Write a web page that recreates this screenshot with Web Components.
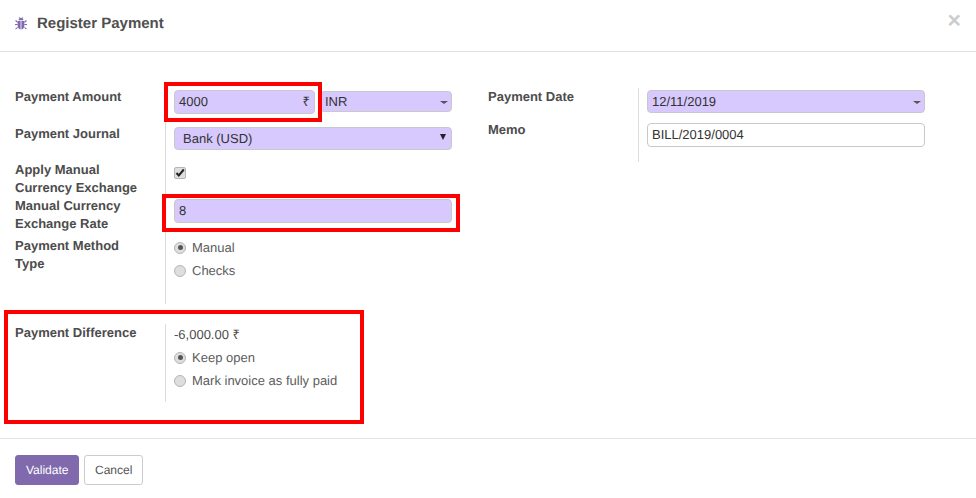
<!DOCTYPE html>
<html>
<head>
<meta charset="utf-8">
<title>Register Payment</title>
<style>
  html, body { margin: 0; padding: 0; background: #fff; }
  body { font: 13px/18px "Liberation Sans", Arial, sans-serif; color: #4c4c4c; text-rendering: geometricPrecision; }
</style>
</head>
<body>

<payment-dialog>
  <dialog-header slot="header">Register Payment</dialog-header>

  <div slot="groups-left">
    <form-group>
      <form-row height="37" label="Payment Amount">
        <div style="display:flex;gap:5px;align-items:flex-start">
          <field-box width="141" height="24" top="2" suffix="₹" required>4000</field-box>
          <field-box width="132" height="21" top="3" caret="grey" required>INR</field-box>
        </div>
      </form-row>
      <form-row height="36" label="Payment Journal">
        <field-box width="278" height="23" top="2" caret="black" pad="8" required>Bank (USD)</field-box>
      </form-row>
      <form-row height="36" label="Apply Manual Currency Exchange">
        <check-mark></check-mark>
      </form-row>
      <form-row height="40" label="Manual Currency Exchange Rate">
        <field-box width="278" height="24" top="2" required>8</field-box>
      </form-row>
      <form-row height="67" label="Payment Method Type">
        <radio-option checked style="margin-top:-1px">Manual</radio-option>
        <radio-option>Checks</radio-option>
      </form-row>
    </form-group>

    <form-group style="margin-top:20px">
      <form-row height="78" label="Payment Difference">
        <div style="height:22px;line-height:22px">-6,000.00 ₹</div>
        <radio-option checked>Keep open</radio-option>
        <radio-option>Mark invoice as fully paid</radio-option>
      </form-row>
    </form-group>
  </div>

  <div slot="groups-right">
    <form-group>
      <form-row height="33" label="Payment Date">
        <field-box width="278" height="23" top="2" caret="grey" required>12/11/2019</field-box>
      </form-row>
      <form-row height="41" label="Memo">
        <field-box width="278" height="24" top="2">BILL/2019/0004</field-box>
      </form-row>
    </form-group>
  </div>

  <action-button slot="footer" primary>Validate</action-button>
  <action-button slot="footer">Cancel</action-button>
</payment-dialog>

<annot-box style="left:164px;top:82px;width:158px;height:40px"></annot-box>
<annot-box style="left:162px;top:194px;width:298px;height:38px"></annot-box>
<annot-box style="left:4px;top:310px;width:360px;height:114px"></annot-box>

<script>
class PaymentDialog extends HTMLElement {
  connectedCallback() {
    this.attachShadow({ mode: 'open' });
    this.shadowRoot.innerHTML = `
      <style>
        :host { display: block; width: 976px; height: 498px; overflow: hidden; }
        .body {
          display: flex;
          height: 350px;
          padding: 36px 0 0 15px;
        }
        .left { width: 473px; }
        .footer {
          display: flex;
          gap: 5px;
          border-top: 1px solid #e2e2e2;
          padding: 16px 15px 0;
        }
      </style>
      <slot name="header"></slot>
      <div class="body">
        <div class="left"><slot name="groups-left"></slot></div>
        <div class="right"><slot name="groups-right"></slot></div>
      </div>
      <div class="footer"><slot name="footer"></slot></div>
    `;
  }
}

class DialogHeader extends HTMLElement {
  connectedCallback() {
    this.attachShadow({ mode: 'open' });
    this.shadowRoot.innerHTML = `
      <style>
        :host {
          display: flex;
          align-items: center;
          height: 47px;
          padding-bottom: 4px;
          border-bottom: 1px solid #e2e2e2;
          position: relative;
        }
        svg { margin-left: 15px; width: 12px; height: 13px; flex: none; }
        h4 {
          margin: 0 0 0 10px;
          font-size: 15px;
          line-height: 18px;
          font-weight: bold;
          color: #505050;
        }
        .close {
          position: absolute;
          right: 15px;
          top: 10px;
          font-size: 23px;
          line-height: 21px;
          font-weight: bold;
          color: #cccccc;
        }
      </style>
      <svg viewBox="0 0 12 13" fill="#8069ad">
        <path d="M3.600 3.200C3.800 1.600 4.800.8 6 .8s2.200.8 2.400 2.400z"/>
        <path d="M2.700 4h2.900v8.400C3.800 12.200 2.700 10.800 2.700 9zM6.400 4h2.900v5c0 1.800-1.100 3.200-2.900 3.400z"/>
        <path d="M.9 3l1.800 1.600v1H1.900L.2 4zM11.100 3L9.300 4.600v1h.8L11.800 4zM0 7h2.700v1H0zM9.300 7H12v1H9.300zM2.700 9.800v1L1 12.500l-.8-.8zM9.300 9.800v1l1.700 1.700.8-.8zM3.700.3l.6-.3.7 1-.6.300zM8.300.3L7.700 0 7 1l.6.300z"/>
      </svg>
      <h4><slot></slot></h4>
      <span class="close">×</span>
    `;
  }
}

class FormGroup extends HTMLElement {
  connectedCallback() {
    this.attachShadow({ mode: 'open' });
    this.shadowRoot.innerHTML = `
      <style>:host { display: block; }</style>
      <slot></slot>
    `;
  }
}

class FormRow extends HTMLElement {
  connectedCallback() {
    this.attachShadow({ mode: 'open' });
    const h = this.getAttribute('height');
    this.shadowRoot.innerHTML = `
      <style>
        :host { display: flex; height: ${h}px; }
        .label {
          width: 150px;
          box-sizing: border-box;
          padding-right: 20px;
          font-weight: bold;
          color: #4c4c4c;
        }
        .field {
          width: 287px;
          box-sizing: border-box;
          border-left: 1px solid #dcdcdc;
          padding-left: 8px;
        }
      </style>
      <div class="label">${this.getAttribute('label')}</div>
      <div class="field"><slot></slot></div>
    `;
  }
}

class FieldBox extends HTMLElement {
  connectedCallback() {
    this.attachShadow({ mode: 'open' });
    const w = this.getAttribute('width');
    const h = this.getAttribute('height');
    const top = this.getAttribute('top') || 0;
    const pad = this.getAttribute('pad') || 4;
    const bg = this.hasAttribute('required') ? '#d7c9fd' : '#fff';
    const caret = this.getAttribute('caret');
    const suffix = this.getAttribute('suffix');
    let end = '';
    if (suffix) end = `<span class="suffix">${suffix}</span>`;
    if (caret) end = `<span class="caret ${caret}"></span>`;
    this.shadowRoot.innerHTML = `
      <style>
        :host {
          display: flex;
          align-items: center;
          box-sizing: border-box;
          width: ${w}px;
          height: ${h}px;
          margin-top: ${top}px;
          padding: 0 3px 0 ${pad}px;
          background: ${bg};
          border: 1px solid #c9c9c9;
          border-radius: 4px;
          color: #333;
          flex: none;
        }
        .text { flex: 1; }
        .suffix { font-size: 13px; color: #333; margin-right: 1px; }
        .caret { width: 0; height: 0; border-style: solid; border-color: transparent; }
        .caret.grey { border-width: 3px 4px 0; border-top-color: #555; margin: 2px 0 0; }
        .caret.black { border-width: 6px 3px 0; border-top-color: #222; margin: -3px 2px 0 0; }
      </style>
      <span class="text"><slot></slot></span>
      ${end}
    `;
  }
}

class CheckMark extends HTMLElement {
  connectedCallback() {
    this.attachShadow({ mode: 'open' });
    this.shadowRoot.innerHTML = `
      <style>
        :host {
          display: block;
          box-sizing: border-box;
          width: 12px;
          height: 12px;
          margin-top: 6px;
          border: 1px solid #b5b5b5;
          border-radius: 2px;
          background: #dedede;
        }
        svg { display: block; width: 10px; height: 10px; }
      </style>
      <svg viewBox="0 0 10 10"><path d="M1.500 5l2.300 2.500L8.800 1.500" fill="none" stroke="#222" stroke-width="2"/></svg>
    `;
  }
}

class RadioOption extends HTMLElement {
  connectedCallback() {
    this.attachShadow({ mode: 'open' });
    const on = this.hasAttribute('checked');
    this.shadowRoot.innerHTML = `
      <style>
        :host {
          display: flex;
          align-items: center;
          height: 23px;
          color: #5c5c5c;
        }
        .dot {
          box-sizing: border-box;
          width: 12px;
          height: 12px;
          margin-right: 6px;
          border: 1px solid #b5b5b5;
          border-radius: 50%;
          background: #dedede;
          display: flex;
          align-items: center;
          justify-content: center;
        }
        .dot i { width: 5px; height: 5px; border-radius: 50%; background: #555; }
      </style>
      <span class="dot">${on ? '<i></i>' : ''}</span>
      <span><slot></slot></span>
    `;
  }
}

class ActionButton extends HTMLElement {
  connectedCallback() {
    this.attachShadow({ mode: 'open' });
    const primary = this.hasAttribute('primary');
    this.shadowRoot.innerHTML = `
      <style>
        :host {
          display: block;
          box-sizing: border-box;
          height: 30px;
          padding: 0 ${primary ? 10 : 9.5}px;
          font-size: 12px;
          line-height: 28px;
          border-radius: 3px;
          border: 1px solid ${primary ? '#8069ad' : '#ccc'};
          background: ${primary ? '#8069ad' : '#fff'};
          color: ${primary ? '#fff' : '#555'};
        }
      </style>
      <slot></slot>
    `;
  }
}

class AnnotBox extends HTMLElement {
  connectedCallback() {
    this.attachShadow({ mode: 'open' });
    this.shadowRoot.innerHTML = `
      <style>
        :host {
          display: block;
          position: absolute;
          box-sizing: border-box;
          border: 4px solid #f00;
          pointer-events: none;
        }
      </style>
    `;
  }
}

customElements.define('payment-dialog', PaymentDialog);
customElements.define('dialog-header', DialogHeader);
customElements.define('form-group', FormGroup);
customElements.define('form-row', FormRow);
customElements.define('field-box', FieldBox);
customElements.define('check-mark', CheckMark);
customElements.define('radio-option', RadioOption);
customElements.define('action-button', ActionButton);
customElements.define('annot-box', AnnotBox);
</script>
</body>
</html>
